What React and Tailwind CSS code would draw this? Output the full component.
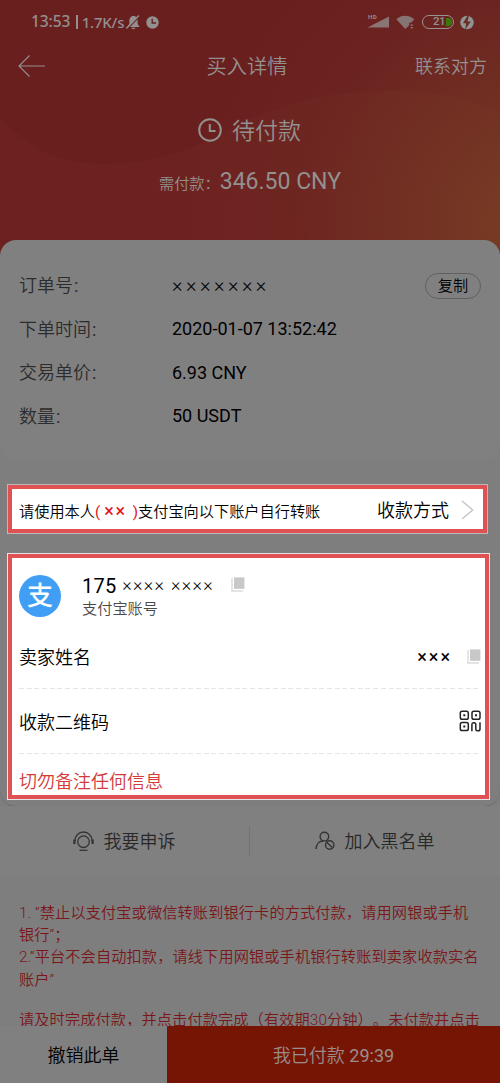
import React from "react";

const orderRows = [
  { label: "订单号", value: "×××××××", masked: true, copy: true },
  { label: "下单时间", value: "2020-01-07 13:52:42" },
  { label: "交易单价", value: "6.93 CNY" },
  { label: "数量", value: "50 USDT" },
];

function HeaderBackdrop() {
  return (
    <svg className="absolute inset-0 h-full w-full" viewBox="0 0 500 260" preserveAspectRatio="none" aria-hidden="true">
      <defs>
        <radialGradient id="glow" gradientUnits="userSpaceOnUse" cx="540" cy="225" r="350">
          <stop offset="0" stopColor="#7a3f24" />
          <stop offset="0.35" stopColor="#713023" />
          <stop offset="0.7" stopColor="#6b2220" />
          <stop offset="1" stopColor="#6a1f1f" />
        </radialGradient>
        <linearGradient id="wave" x1="0" x2="1">
          <stop offset="0" stopColor="#742424" stopOpacity="0.3" />
          <stop offset="1" stopColor="#783c26" stopOpacity="0.15" />
        </linearGradient>
      </defs>
      <rect width="500" height="260" fill="url(#glow)" />
      <path d="M0 117C25 143 50 163 100 164C155 165 190 150 235 127C300 95 345 90 400 91C440 92 475 100 500 114V260H0Z" fill="url(#wave)" />
      <path d="M140 175C190 170 285 172 313 250H140Z" fill="#7b2928" fillOpacity="0.1" />
    </svg>
  );
}

function StatusBar() {
  return (
    <div className="flex h-11 items-center pl-[31px] pr-[26px] text-[#929090]">
      <span className="whitespace-nowrap font-['Noto_Sans',sans-serif] text-[15.5px] font-medium leading-none tracking-[-0.1px]">13:53</span>
      <span className="ml-[6px] h-[14px] w-[1.5px] bg-[#929090]" />
      <span className="ml-[4px] w-[43px] whitespace-nowrap font-['Noto_Sans',sans-serif] text-[15px] font-medium leading-none tracking-[-0.2px]">1.7K/s</span>
      <svg className="ml-[1px] h-[15px] w-[14px]" viewBox="0 0 14 15">
        <path d="M7.4 0.8C10 1.2 11.6 3.2 11.6 5.6V9L13.6 12H2V11L3.3 9V5.6C3.3 3.2 5 1.2 7.4 0.8ZM5.4 12.8H9.4C9.2 14.7 5.6 14.7 5.4 12.8Z" fill="#929090" />
        <path d="M1.1 14.1L13.6 1.4" stroke="#6a1f1f" strokeWidth="1.3" />
        <path d="M0.3 13.5L12.9 0.5" stroke="#929090" strokeWidth="1.4" />
      </svg>
      <svg className="ml-[6px] h-[13px] w-[13px]" viewBox="0 0 13 13">
        <circle cx="6.5" cy="6.5" r="6.2" fill="#929090" />
        <path d="M6.2 2.8V7H10" fill="none" stroke="#6a1f1f" strokeWidth="1.4" />
      </svg>
      <div className="ml-auto flex items-center">
        <svg className="h-[15px] w-[23px] overflow-visible font-['Roboto',sans-serif]" viewBox="0 0 23 15">
          <path d="M0.5 12.6L22 1.4V12.6Z" fill="#8a7574" />
          <text x="1" y="3.7" fontSize="6.2" fontWeight="700" fill="#938c8c" letterSpacing="0.4">HD</text>
        </svg>
        <svg className="ml-[6px] h-[15px] w-[19px]" viewBox="0 0 19 15">
          <path d="M0.3 4.2C5.4 -0.4 12.9 -0.4 18.3 4.2L15.2 7.8H13.2V10.2L9.3 13.9Z" fill="#857473" />
          <path d="M14.3 10.5L15.8 9L17.3 10.5ZM14.3 12.2H17.3L15.8 13.8Z" fill="#929090" />
        </svg>
        <div className="ml-[7px] flex h-[14px] w-8 items-center justify-end overflow-hidden rounded-full border-[1.4px] border-[#9a9191] pr-px">
          <span className="font-['Roboto',sans-serif] text-[11.5px] font-medium leading-none tracking-[-0.5px]">21</span>
          <span className="ml-[1px] h-2 w-[6px] rounded-r-full bg-[#397a07]" />
        </div>
        <svg className="ml-[6px] h-[15px] w-[14px]" viewBox="0 0 14 15">
          <circle cx="7" cy="7.5" r="6.8" fill="#8d9492" />
          <path d="M7.7 0.4L3 8.2H6.2L5.2 14.6L10.8 6.6H7.4L9 0.4Z" fill="#6d2922" />
        </svg>
      </div>
    </div>
  );
}

function CopyIcon({ className }) {
  return (
    <svg className={className} width="14" height="15" viewBox="0 0 14 15">
      <path d="M1 1V14H12" fill="none" stroke="#dadada" strokeWidth="1.4" />
      <path d="M3 0.4H13.4V11.8H3Z" fill="#c8c8c8" />
    </svg>
  );
}

function QrIcon() {
  return (
    <svg width="22" height="22" viewBox="0 0 22 22" fill="none" stroke="#242424" strokeWidth="1.5">
      <rect x="1.3" y="1.2" width="8" height="8" rx="1.8" />
      <rect x="13" y="1.2" width="8" height="8" rx="1.8" />
      <rect x="1.3" y="12.6" width="8" height="8" rx="1.8" />
      <path d="M12.9 21.3V14.5Q12.9 12.7 14.4 12.7H15.1Q16.8 12.7 16.8 14.5V19Q16.8 20.8 18.4 20.8H19.2Q21 20.8 21 19V12.2" />
      <path d="M4.3 5.2H6.3M16 5.2H18M4.3 16.6H6.3" strokeWidth="2" />
    </svg>
  );
}

export default function App() {
  return (
    <div className="relative flex h-[1083px] w-[500px] flex-col overflow-hidden bg-[#7e7e7e] font-['Roboto','Noto_Sans_CJK_SC',sans-serif] text-[18px] leading-none text-black">
      <header className="relative h-[260px] shrink-0 overflow-hidden">
        <HeaderBackdrop />
        <div className="relative text-[#939090]">
          <StatusBar />
          <nav className="grid h-11 grid-cols-[1fr_auto_1fr] items-center pl-[18px] pr-[13px]">
            <svg width="28" height="22" viewBox="0 0 28 22" fill="none" stroke="#939090" strokeWidth="1.1">
              <path d="M11.5 0.5L1 11L11.5 21.5M1 11H27" />
            </svg>
            <h1 className="mr-[11px] pt-[2px] text-[20.2px] font-[350]">买入详情</h1>
            <span className="pt-[2px] text-right font-[350]">联系对方</span>
          </nav>
          <div className="mt-[24px] flex h-9 items-center justify-center gap-[10px] pr-px">
            <svg width="24" height="24" viewBox="0 0 24 24" fill="none" stroke="#939090" strokeWidth="2">
              <circle cx="12" cy="12" r="10.8" />
              <path d="M11.8 6V13H17.5" />
            </svg>
            <span className="pt-[3px] text-[23px] font-[350]">待付款</span>
          </div>
          <div className="mt-[18px] flex h-8 items-baseline justify-center pt-[4px]">
            <span className="text-[15.2px] font-[350]">需付款：</span>
            <span className="text-[23px]">346.50 CNY</span>
          </div>
        </div>
      </header>

      <section className="relative -mt-5 h-[220px] shrink-0 rounded-2xl bg-[#808080] pl-[19px] pr-[19px] pt-[24px]">
        {orderRows.map((row) => (
          <div key={row.label} className="flex h-[43.5px] items-center">
            <span className="w-[153px] pt-px font-[350] text-[#2c2c2c]">
              {row.label}
              <span className="ml-px font-normal">:</span>
            </span>
            <span className={row.masked ? "pb-px text-[20px] font-[350] tracking-[3.5px]" : ""}>{row.value}</span>
            {row.copy && (
              <button className="ml-auto h-[26px] w-14 rounded-full border border-[#606060] pt-px text-[15.2px] font-[350] leading-none">复制</button>
            )}
          </div>
        ))}
      </section>

      <section className="mt-[25px] ml-2 flex h-12 w-[479px] shrink-0 items-center border-4 border-[#e05153] bg-white pl-[7px] pr-[9px] outline outline-[#b9b9b9]">
        <p className="whitespace-pre pt-[4px] text-[15.2px] font-[350]">
          请使用本人<span className="font-normal text-[#e11217]">(<span className="ml-[4px] mr-[2px] text-[18px] tracking-[1.8px]">××</span> )</span>支付宝向以下账户自行转账
        </p>
        <span className="ml-auto pt-[4px] font-[350]">收款方式</span>
        <svg className="ml-[12px] mt-[2px]" width="13" height="20" viewBox="0 0 13 20" fill="none" stroke="#c2c2c2" strokeWidth="1.3">
          <path d="M1 1L11.7 10L1 19" />
        </svg>
      </section>

      <div className="mt-5 h-[254px] shrink-0 rounded-b-2xl border-b border-[#6a6a6a] pl-2 pt-px">
        <section className="flex h-[245px] w-[481px] flex-col border-4 border-[#e05153] bg-white pl-[7px] pr-[4px] outline outline-[#e4e4e4]">
          <div className="flex h-[76px] items-center">
            <span className="flex h-[42px] w-[42px] items-center justify-center rounded-full bg-[#409ff5] text-[26px] font-medium text-white">支</span>
            <div className="ml-[21px]">
              <div className="flex h-[24px] items-center text-[20px]">
                <span className="tracking-[0.2px]">175</span>
                <span className="ml-[6px] -mt-[3px] whitespace-nowrap text-[18px] font-[350] tracking-[1.3px]">×××× ××××</span>
                <CopyIcon className="ml-[17px] -mt-[3px]" />
              </div>
              <div className="mt-[4px] text-[15.2px] font-[350] text-[#4a4a4a]">支付宝账号</div>
            </div>
          </div>
          <div className="flex h-[54px] items-center pb-[6px]">
            <span className="font-[350]">卖家姓名</span>
            <span className="ml-auto -mt-[3px] tracking-[2px]">×××</span>
            <CopyIcon className="-mt-[4px] ml-[15px]" />
          </div>
          <div className="h-px shrink-0 bg-[repeating-linear-gradient(90deg,#e6e6e6_0_5px,transparent_5px_7.7px)]" />
          <div className="flex h-[64px] items-center justify-between">
            <span className="pt-[3px] font-[350]">收款二维码</span>
            <QrIcon />
          </div>
          <div className="h-px shrink-0 bg-[repeating-linear-gradient(90deg,#e6e6e6_0_5px,transparent_5px_7.7px)]" />
          <p className="pt-[19px] font-[350] text-[#d33a3a]">切勿备注任何信息</p>
        </section>
      </div>

      <section className="-mt-px flex h-[70px] shrink-0 items-center bg-[#808080] font-[350] text-[#282828]">
        <div className="flex h-[31px] w-[250px] items-center justify-center gap-[10px] border-r border-[#737373] pr-px">
          <svg width="21" height="21" viewBox="0 0 21 21" fill="none" stroke="#333" strokeWidth="1.3">
            <path d="M2 10V9.5A8.4 8.4 0 0 1 19 9.5V10" />
            <circle cx="10.5" cy="10.7" r="5.8" />
            <path d="M1.4 8.5V13M19.6 8.5V13" strokeWidth="2.2" />
            <path d="M6.5 19.3H14.5" />
          </svg>
          <span className="pt-[2px]">我要申诉</span>
        </div>
        <div className="flex w-[250px] items-center justify-center gap-[10px] pr-px">
          <svg width="20" height="20" viewBox="0 0 20 20" fill="none" stroke="#333" strokeWidth="1.4">
            <circle cx="9.4" cy="5.6" r="4.3" />
            <path d="M1.2 18C1.2 13.2 4 10 8.3 10" />
            <circle cx="14.7" cy="14" r="4.2" />
            <path d="M11.7 11.2L17.6 16.8" />
          </svg>
          <span className="pt-[2px]">加入黑名单</span>
        </div>
      </section>

      <section className="h-[150px] shrink-0 overflow-hidden whitespace-nowrap pl-[19px] pt-[26px] text-[15.2px] font-[350] leading-[22.2px] tracking-[0.12px] text-[#7b171b] [text-spacing-trim:space-all]">
        <p>1. “禁止以支付宝或微信转账到银行卡的方式付款，请用网银或手机<br />银行”；</p>
        <p>2.“平台不会自动扣款，请线下用网银或手机银行转账到卖家收款实名<br />账户”</p>
        <p className="mt-[18px]">请及时完成付款，并点击付款完成（有效期30分钟）。未付款并点击</p>
      </section>

      <footer className="flex h-[58px] shrink-0">
        <button className="w-[167px] bg-[#808080] pt-[2px] font-[350]">撤销此单</button>
        <button className="grow bg-[#771505] pt-px text-[#9a8d8a]"><span className="font-[350]">我已付款</span> 29:39</button>
      </footer>
    </div>
  );
}
